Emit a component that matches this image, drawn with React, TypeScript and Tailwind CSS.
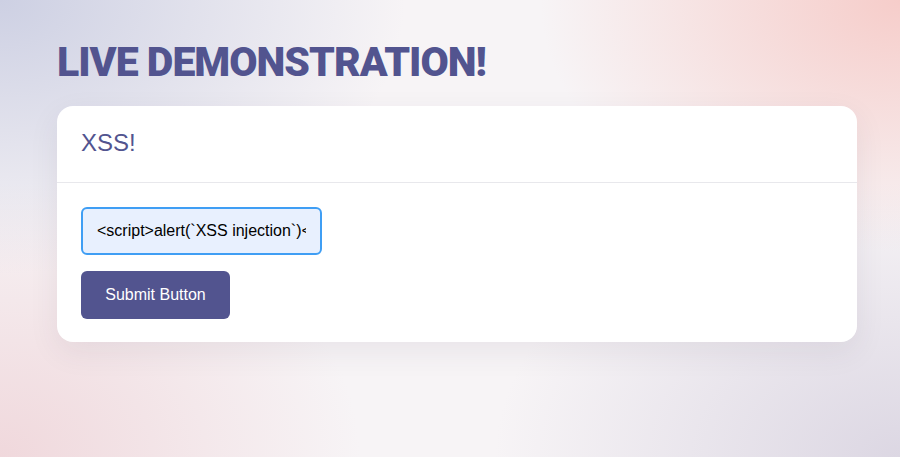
export default function App() {
  return (
    <div className="min-h-[457px] w-full bg-[#f7f4f6] bg-[radial-gradient(ellipse_45%_60%_at_0%_0%,#cdd0e3_0%,transparent_100%),radial-gradient(ellipse_40%_55%_at_100%_0%,#f6cdca_0%,transparent_100%),radial-gradient(ellipse_40%_60%_at_0%_100%,#f0d8dc_0%,transparent_100%),radial-gradient(ellipse_45%_60%_at_100%_100%,#dcd7e3_0%,transparent_100%)] px-[57px] pt-[38px] pb-[40px] font-['Liberation_Sans',Arial,sans-serif]">
      <h1 className="font-['Roboto',sans-serif] text-[41px] font-black leading-[48px] tracking-[-1px] text-[#52548f]">
        LIVE DEMONSTRATION!
      </h1>
      <div className="mt-[20px] w-[800px] rounded-[16px] bg-white shadow-[0_10px_30px_rgba(60,50,80,0.08)]">
        <div className="border-b border-[#e8e8ec] px-6 pt-[23px] pb-[25px]">
          <h2 className="text-[24px] leading-[28px] text-[#52548f]">XSS!</h2>
        </div>
        <div className="flex flex-col items-start gap-4 px-6 pt-6 pb-[23px]">
          <input
            type="text"
            defaultValue="<script>alert(`XSS injection`)</script>"
            className="h-[48px] w-[241px] rounded-[6px] border-2 border-[#3f9ef4] bg-[#e8f0fe] px-[14px] text-[16px] text-black outline-none"
          />
          <button className="h-[48px] w-[149px] rounded-[6px] bg-[#52548f] text-[16px] text-white">
            Submit Button
          </button>
        </div>
      </div>
    </div>
  )
}
